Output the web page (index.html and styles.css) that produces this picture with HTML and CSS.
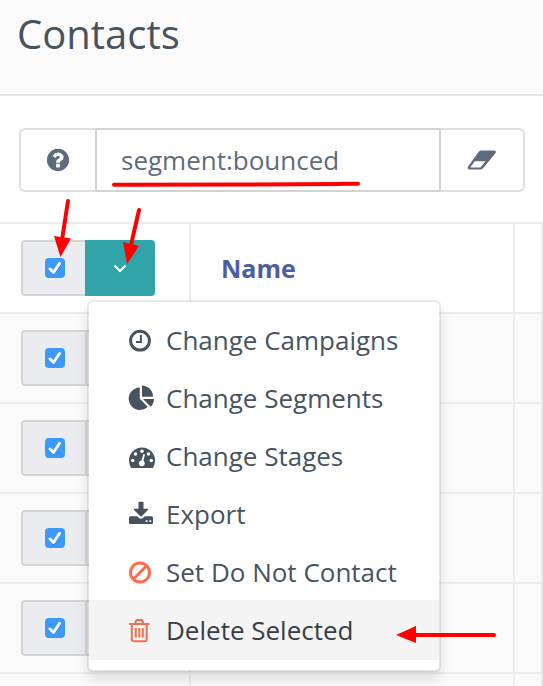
FILE: index.html
```html
<!DOCTYPE html>
<html lang="en">
<head>
<meta charset="utf-8">
<title>Contacts</title>
<meta name="viewport" content="width=device-width, initial-scale=1">
<link rel="stylesheet" href="styles.css">
</head>
<body>
<header class="page-header"><h1>Contacts</h1></header>
<main>
  <form class="search">
    <button type="button" class="addon help" aria-label="Help">
      <svg width="26" height="26" viewBox="0 0 1792 1792"><path d="M1024 1376v-192q0-14-9-23t-23-9h-192q-14 0-23 9t-9 23v192q0 14 9 23t23 9h192q14 0 23-9t9-23zm256-672q0-88-55.5-163t-138.5-116-170-41q-243 0-371 213-15 24 8 42l132 100q7 6 19 6 16 0 25-12 53-68 86-92 34-24 86-24 48 0 85.5 26t37.5 59q0 38-20 61t-68 45q-63 28-115.5 86.5t-52.5 125.5v36q0 14 9 23t23 9h192q14 0 23-9t9-23q0-19 21.5-49.5t54.5-49.5q32-18 49-28.5t46-35 44.5-48 28-60.5 12.5-81zm384 192q0 209-103 385.5t-279.5 279.5-385.5 103-385.5-103-279.5-279.5-103-385.5 103-385.5 279.5-279.5 385.5-103 385.5 103 279.5 279.5 103 385.5z"/></svg>
    </button>
    <input class="query" type="text" value="segment:bounced" aria-label="Search contacts" spellcheck="false">
    <button type="button" class="addon clear" aria-label="Clear search">
      <svg width="30" height="20" viewBox="0 0 30 20"><path fill-rule="evenodd" d="M14 .5H27.2Q29.800 .8 28.400 3.200L16.300 18.100Q15.200 19.400 13.600 19.400H2.600Q-.2 19 1.100 16.600L11.600 1.900Q12.600 .5 14 .5ZM7.800 11.200L3.200 17.500H13.400L18.500 11.200Z"/></svg>
    </button>
  </form>

  <table class="contacts">
    <colgroup><col class="col-select"><col class="col-name"><col></colgroup>
    <thead>
      <tr>
        <th>
          <div class="group">
            <label class="pick"><input type="checkbox" checked aria-label="Select all"><svg viewBox="0 0 20 20"><path d="M5 11L8.500 14.500L14.500 5.500"/></svg></label>
            <button type="button" class="toggle open" aria-label="Bulk actions"><svg width="14" height="10" viewBox="0 0 14 10"><path d="M1.500 2.500L7 8L12.500 2.500"/></svg></button>
            <div class="menu">
              <a href="#"><svg viewBox="0 0 26 26"><circle class="line" cx="11" cy="13.700" r="9.400"/><path class="hand" d="M11.900 8v6.900H7"/></svg>Change Campaigns</a>
              <a href="#"><svg viewBox="0 0 26 26"><path d="M10.800 2.600V13.700L18.700 21.800A11.200 11.200 0 1 1 10.800 2.600ZM13 .500A11.200 11.200 0 0 1 24 11.700H13ZM14 14H25A11.200 11.200 0 0 1 21.700 21.700Z"/></svg>Change Segments</a>
              <a href="#"><svg viewBox="0 0 26 26"><path d="M2 25Q0 21.500 0 17.500A13 13 0 0 1 26 17.500Q26 21.500 24 25Z"/><g class="dots"><circle cx="3.700" cy="17.500" r="1.700"/><circle cx="6.500" cy="11" r="1.700"/><circle cx="13" cy="8.300" r="1.700"/><circle cx="19.500" cy="11" r="1.700"/><circle cx="22.300" cy="17.500" r="1.700"/><circle cx="12.800" cy="20.300" r="2.900"/><path d="M12 19L14.300 11.200Q15.500 10.700 15.900 11.700L14 19.500Z"/></g></svg>Change Stages</a>
              <a href="#"><svg viewBox="0 0 26 26"><path d="M9.500 1.500Q9.500.700 10.300.700H13.700Q14.500.700 14.500 1.500V7.800H18.600Q19.800 8 19 9L12.700 15.300Q12 15.800 11.300 15.300L5 9Q4.200 8 5.400 7.800H9.500Z"/><path fill-rule="evenodd" d="M1.300 15.200H8.100L10 17.100Q12 18.500 14 17.100L15.900 15.200H22.700Q24 15.300 24 16.600V21.700Q24 23 22.700 23H1.300Q0 23 0 21.700V16.600Q0 15.300 1.300 15.200ZM16.700 19.300V21.100H18.500V19.300ZM20.400 19.300V21.100H22.200V19.300Z"/></svg>Export</a>
              <a href="#" class="danger"><svg viewBox="0 0 26 26"><circle class="line" cx="11" cy="13.500" r="9.500"/><path class="line" d="M4.500 20L17.500 7"/></svg>Set Do Not Contact</a>
              <a href="#" class="danger current"><svg viewBox="0 0 26 26"><path class="trash" d="M0 7H20.500M6 7L7 3.800Q7.300 3 8.200 3H12.300Q13.200 3 13.500 3.800L14.500 7M2.800 7V22Q2.800 24.200 4.800 24.200H15.700Q17.700 24.200 17.700 22V7M6.800 11V20.500M10.300 11V20.500M13.800 11V20.500"/></svg>Delete Selected</a>
            </div>
          </div>
        </th>
        <th class="name"><a href="#">Name</a></th>
        <th></th>
      </tr>
    </thead>
    <tbody>
      <tr><td><div class="group"><label class="pick"><input type="checkbox" checked aria-label="Select contact 1"><svg viewBox="0 0 20 20"><path d="M5 11L8.500 14.500L14.500 5.500"/></svg></label><button type="button" class="toggle" aria-label="Actions for contact 1"></button></div></td><td></td><td></td></tr>
      <tr><td><div class="group"><label class="pick"><input type="checkbox" checked aria-label="Select contact 2"><svg viewBox="0 0 20 20"><path d="M5 11L8.500 14.500L14.500 5.500"/></svg></label><button type="button" class="toggle" aria-label="Actions for contact 2"></button></div></td><td></td><td></td></tr>
      <tr><td><div class="group"><label class="pick"><input type="checkbox" checked aria-label="Select contact 3"><svg viewBox="0 0 20 20"><path d="M5 11L8.500 14.500L14.500 5.500"/></svg></label><button type="button" class="toggle" aria-label="Actions for contact 3"></button></div></td><td></td><td></td></tr>
      <tr><td><div class="group"><label class="pick"><input type="checkbox" checked aria-label="Select contact 4"><svg viewBox="0 0 20 20"><path d="M5 11L8.500 14.500L14.500 5.500"/></svg></label><button type="button" class="toggle" aria-label="Actions for contact 4"></button></div></td><td></td><td></td></tr>
      <tr class="tail"><td></td><td></td><td></td></tr>
    </tbody>
  </table>
</main>
<svg class="marks" width="543" height="686" viewBox="0 0 543 686" aria-hidden="true">
  <path d="M114 184.800L240 184.500L358 183.800M68 201L62 240M139 210L131 245M494 635H414"/>
  <path class="head" d="M54 236L71 238.500L60.500 257ZM123 242L139 246L127 264ZM396 635L416 626V643Z"/>
</svg>
</body>
</html>
```
FILE: styles.css
```css
* { box-sizing: border-box; }

body {
  margin: 0;
  background: #fff;
  color: #47535f;
  font-family: "Open Sans", "Noto Sans", sans-serif;
  font-size: 26px;
  line-height: 36px;
}

button, input { font: inherit; color: inherit; margin: 0; }
a { color: inherit; text-decoration: none; }
svg { display: block; fill: currentColor; }

.page-header {
  padding: 4px 17px 30px;
  background: #fbfbfb;
  border-bottom: 2px solid #e4e8ec;
}

.page-header h1 {
  margin: 0;
  font-size: 40px;
  line-height: 60px;
  font-weight: 400;
}

.search {
  display: flex;
  height: 64px;
  margin: 32px 18px 30px 19px;
  color: #5d6c7c;
}

.addon {
  display: flex;
  align-items: center;
  justify-content: center;
  padding: 0;
  background: #fff;
  border: 2px solid #dedede;
}

.help { width: 76px; border-right: 0; border-radius: 6px 0 0 6px; }
.clear { width: 84px; border-left: 0; border-radius: 0 6px 6px 0; }

.query {
  flex: 1;
  min-width: 0;
  padding: 0 24px;
  background: #fff;
  border: 2px solid #d3d3d3;
  border-radius: 0;
  outline: 0;
}

.contacts {
  width: 100%;
  table-layout: fixed;
  border-collapse: separate;
  border-spacing: 0;
}

.col-select { width: 191px; }
.col-name { width: 324px; }

.contacts th, .contacts td {
  height: 90px;
  padding: 16px 21px;
  border-top: 2px solid #ebebf0;
  border-right: 2px solid #ebebf0;
  text-align: left;
}

.contacts td { background: #fafafa; }
.contacts .tail td { height: 14px; padding: 0; }
.contacts .name { padding: 0 30px; color: #4e5d9d; font-size: 25px; font-weight: 700; }

.group { position: relative; display: flex; width: 134px; height: 56px; }

.pick {
  display: grid;
  place-items: center;
  width: 66px;
  padding-left: 2px;
  background: #ebecf0;
  border: 2px solid #d5d5d5;
  border-radius: 4px 0 0 4px;
}

th .pick { width: 64px; border-right: 0; }

.pick input, .pick svg { grid-area: 1 / 1; width: 20px; height: 20px; }

.pick input {
  appearance: none;
  background: #3b99fc;
  border-radius: 4px;
}

.pick svg {
  fill: none;
  stroke: #fff;
  stroke-width: 3;
  stroke-linecap: round;
  stroke-linejoin: round;
  pointer-events: none;
  filter: drop-shadow(0 1px 0 #2f7fd6);
}

.toggle {
  display: flex;
  flex: 1;
  align-items: center;
  justify-content: center;
  padding: 0;
  background: #ebecf0;
  border: 2px solid #d5d5d5;
  border-left: 0;
  border-radius: 0 4px 4px 0;
}

.toggle.open { background: #30a4a9; border: 0; }
.toggle svg { fill: none; stroke: #fff; stroke-width: 2; }

.menu {
  position: absolute;
  z-index: 1;
  top: 60px;
  left: 66px;
  width: 354px;
  padding: 8px 0 10px;
  background: #fff;
  background-clip: padding-box;
  border: 2px solid rgba(0, 0, 0, 0.08);
  border-radius: 6px;
  box-shadow: 0 8px 12px rgba(0, 0, 0, 0.1);
  font-weight: 400;
}

.menu a {
  display: flex;
  align-items: center;
  gap: 11px;
  height: 60px;
  padding-left: 40px;
}

.menu a + a { margin-top: -2px; }
.menu .current { background: #f4f4f4; color: #373e48; }
.menu svg { flex: none; width: 26px; height: 26px; overflow: visible; }
.menu .danger svg { color: #fa6c4f; }
.line { fill: none; stroke: currentColor; stroke-width: 3; }
.hand { fill: none; stroke: currentColor; stroke-width: 2; }
.trash { fill: none; stroke: currentColor; stroke-width: 2; }
.dots { fill: #fff; }

.marks {
  position: absolute;
  z-index: 2;
  top: 0;
  left: 0;
  pointer-events: none;
  fill: none;
  stroke: #f00;
  stroke-width: 4;
  stroke-linecap: round;
}

.head { fill: #f00; stroke: none; }
```
